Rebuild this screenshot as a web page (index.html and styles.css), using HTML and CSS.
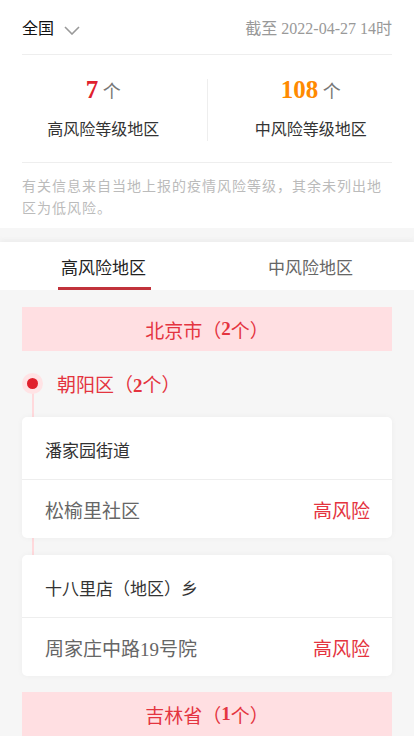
FILE: index.html
```html
<!DOCTYPE html>
<html lang="zh-CN">

<head>
    <meta charset="utf-8">
    <meta name="viewport" content="width=device-width, initial-scale=1">
    <title>疫情风险等级查询</title>
    <link rel="stylesheet" href="styles.css">
</head>

<body>
    <header class="summary">
        <div class="top-row">
            <div class="area-select">
                <span>全国</span>
                <svg class="chevron" width="16" height="9" viewBox="0 0 16 9">
                    <path d="M1 1 L8 8 L15 1" fill="none" stroke="#999" stroke-width="1.6" />
                </svg>
            </div>
            <div class="update-time">截至 2022-04-27 14时</div>
        </div>
        <div class="stats">
            <div class="stat">
                <p class="stat-num"><b class="high">7</b> 个</p>
                <p class="stat-label">高风险等级地区</p>
            </div>
            <div class="stat">
                <p class="stat-num"><b class="mid">108</b> 个</p>
                <p class="stat-label">中风险等级地区</p>
            </div>
        </div>
        <p class="note">有关信息来自当地上报的疫情风险等级，其余未列出地区为低风险。</p>
    </header>

    <nav class="tabs">
        <span class="tab active">高风险地区</span>
        <span class="tab">中风险地区</span>
    </nav>

    <main class="content">
        <h2 class="province">北京市（<b>2</b>个）</h2>
        <section class="district">
            <h3 class="district-name"><span class="dot"></span><span>朝阳区（<b>2</b>个）</span></h3>
            <div class="card">
                <div class="card-title">潘家园街道</div>
                <div class="card-row">
                    <span>松榆里社区</span>
                    <span class="level">高风险</span>
                </div>
            </div>
            <div class="card">
                <div class="card-title">十八里店（地区）乡</div>
                <div class="card-row">
                    <span>周家庄中路19号院</span>
                    <span class="level">高风险</span>
                </div>
            </div>
        </section>
        <h2 class="province">吉林省（<b>1</b>个）</h2>
    </main>
</body>

</html>
```

FILE: styles.css
```css
* {
    box-sizing: border-box;
}

body {
    margin: 0;
    background-color: #f6f6f6;
    font-family: "Liberation Serif", "Noto Sans CJK SC", serif;
    color: #333;
}

p,
h2,
h3 {
    margin: 0;
    font-weight: normal;
}

.summary {
    background-color: white;
}

.top-row {
    display: flex;
    justify-content: space-between;
    align-items: center;
    margin: 0 22px;
    padding: 18px 0 14px;
    line-height: 22px;
    border-bottom: 1px solid #eee;
}

.area-select {
    display: flex;
    align-items: center;
    gap: 10px;
    font-size: 16px;
    color: #111;
}

.chevron {
    margin-top: 2px;
}

.update-time {
    font-size: 16px;
    color: #999;
}

.stats {
    display: flex;
    padding: 24px 0 21px;
}

.stat {
    flex: 1;
    text-align: center;
}

.stat:first-child {
    border-right: 1px solid #eee;
}

.stat-num {
    line-height: 22px;
    font-size: 18px;
    color: #777;
}

.stat-num b {
    font-size: 25px;
}

.high {
    color: #e0212d;
}

.mid {
    color: #ff8a00;
}

.stat-label {
    margin-top: 16px;
    line-height: 22px;
    font-size: 16px;
    color: #333;
}

.note {
    margin: 0 22px;
    padding: 11px 0 10px;
    border-top: 1px solid #eee;
    font-family: "Noto Sans CJK SC", sans-serif;
    line-height: 22px;
    font-size: 14px;
    letter-spacing: 1px;
    color: #bbb;
}

.tabs {
    display: flex;
    margin-top: 14px;
    height: 48px;
    background-color: white;
    box-shadow: 0 -3px 4px #efefef;
}

.tab {
    flex: 1;
    display: flex;
    justify-content: center;
    align-items: center;
    font-size: 17px;
    color: #666;
}

.tab.active {
    position: relative;
    color: #222;
}

.tab.active::after {
    content: "";
    position: absolute;
    bottom: 0;
    left: 50%;
    width: 93px;
    height: 3px;
    margin-left: -46px;
    background-color: #c1323b;
}

.content {
    padding: 17px 22px 0;
}

.province {
    display: flex;
    justify-content: center;
    align-items: center;
    height: 44px;
    background-color: #ffdfe2;
    font-size: 19px;
    color: #e4343f;
}

.province b,
.district-name b {
    font-weight: bold;
}

.district {
    position: relative;
    padding-bottom: 16px;
}

.district::before {
    content: "";
    position: absolute;
    left: 10px;
    top: 32px;
    bottom: 60px;
    width: 2px;
    background-color: #ffd9dc;
}

.district-name {
    display: flex;
    align-items: center;
    gap: 14px;
    height: 64px;
    font-size: 19px;
    color: #e4343f;
}

.dot {
    position: relative;
    width: 21px;
    height: 21px;
    border-radius: 50%;
    background-color: #ffe3e5;
}

.dot::after {
    content: "";
    position: absolute;
    top: 5px;
    left: 5px;
    width: 11px;
    height: 11px;
    border-radius: 50%;
    background-color: #e0212d;
}

.card {
    position: relative;
    margin-top: 2px;
    margin-bottom: 17px;
    border-radius: 5px;
    background-color: white;
    box-shadow: 0 0 6px rgba(0, 0, 0, 0.04);
}

.card:last-child {
    margin-bottom: 0;
}

.card-title {
    display: flex;
    align-items: center;
    height: 63px;
    padding: 3px 23px 0;
    font-size: 17px;
    color: #333;
    border-bottom: 1px solid #eee;
}

.card-row {
    display: flex;
    justify-content: space-between;
    align-items: center;
    height: 58px;
    padding: 0 22px 0 23px;
    font-size: 19px;
    color: #666;
}

.level {
    color: #e4343f;
}
```
